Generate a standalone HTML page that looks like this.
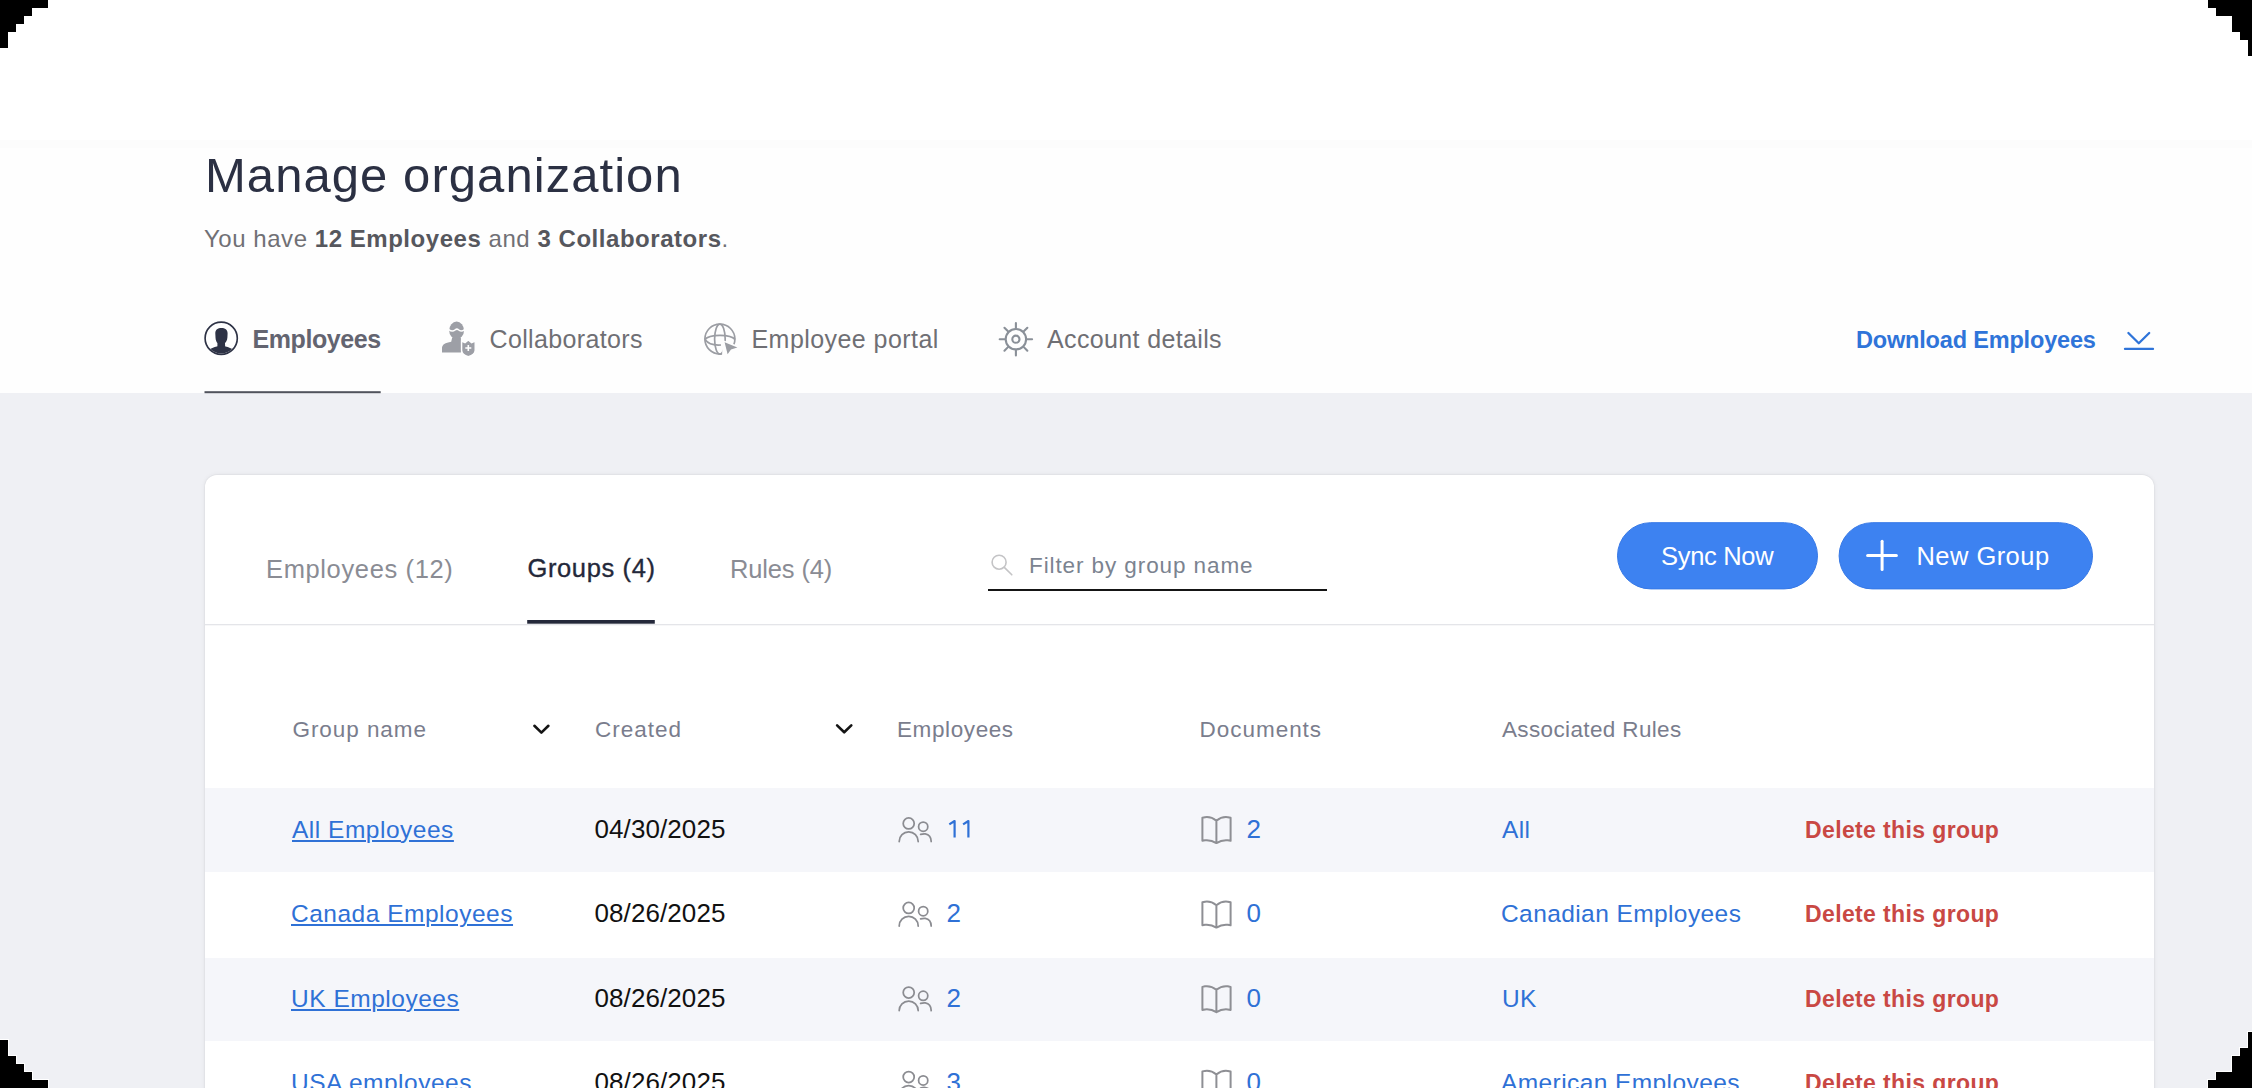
<!DOCTYPE html>
<html><head><meta charset="utf-8"><title>Manage organization</title>
<style>
html,body{margin:0;padding:0;}
body{width:2252px;height:1088px;overflow:hidden;position:relative;background:#eff0f4;font-family:"Liberation Sans",sans-serif;}
.hdr{position:absolute;left:0;top:0;width:2252px;height:393px;background:#fff;}
.hline{position:absolute;left:0;top:140px;width:2252px;height:8px;background:#fcfcfc;}
.hbody{position:absolute;left:0;top:148px;width:2252px;height:245px;background:#fefefe;}
.card{position:absolute;left:205px;top:475px;width:1949px;height:700px;background:#fff;border-radius:12px;box-shadow:0 0 0 1px rgba(0,0,0,0.025),0 0 5px rgba(0,0,0,0.07);}
.row{position:absolute;left:205px;width:1949px;background:#f5f6fa;}
.ov{position:absolute;left:0;top:0;}
.t{position:absolute;line-height:1;white-space:nowrap;}
.t b{font-weight:700;}
.u{text-decoration:underline;text-decoration-thickness:2px;text-underline-offset:2.2px;}
</style></head>
<body>
<div class="hdr"></div><div class="hline"></div><div class="hbody"></div>
<div class="card"></div>
<div class="row" style="top:788px;height:84.2px"></div>
<div class="row" style="top:957.6px;height:83.2px"></div>
<svg class="ov" width="2252" height="1088" viewBox="0 0 2252 1088">
<!-- nav: employees avatar -->
<defs><clipPath id="cc"><circle cx="221.2" cy="338.2" r="15.2"/></clipPath></defs>
<circle cx="221.2" cy="338.2" r="16.1" fill="none" stroke="#2d3245" stroke-width="1.65"/>
<g clip-path="url(#cc)" fill="#2d3245">
<path d="M215.3 333.5 C215.3 329.5 217.8 328 221.4 328 C225 328 227.6 329.5 227.6 333.5 L227.4 337.5 C227.2 340.5 226 342 225 343 L225.2 348 L217.4 348 L217.4 343 C216.6 342 215.6 340.5 215.5 337.5 Z"/>
<ellipse cx="221.2" cy="360.2" rx="17" ry="14.2"/>
</g>
<!-- collaborators -->
<g fill="#9d9fa6">
<ellipse cx="456.6" cy="330.4" rx="7.4" ry="8.8"/>
<path d="M442 352.6 L442 348.3 C442 344.6 445.2 342.6 451.2 341.7 L452.2 337.6 L460.9 337.6 L460.9 352.6 Z"/>
</g>
<path d="M448.8 329.6 C451.5 331.6 453.8 331 455 330 C456.2 329 457.2 328.6 458.4 329.8 C459.8 331.2 462 331.6 464.6 329.6" fill="none" stroke="#fff" stroke-width="1.5"/>
<path d="M461.6 341.2 L465 342.6 L468.3 340 L471.6 342.6 L475.2 341.2 L475.2 350.2 C475 354 471.5 355.8 468.3 356.6 C465.1 355.8 461.8 354 461.6 350.2 Z" fill="#9d9fa6" stroke="#fff" stroke-width="1.4"/>
<path d="M468.3 345 V351 M465.3 348 H471.3" stroke="#fff" stroke-width="1.6"/>
<!-- globe -->
<g fill="none" stroke="#9b9da3" stroke-width="1.7">
<circle cx="719.9" cy="339.1" r="15"/>
<ellipse cx="719.9" cy="339.1" rx="5.3" ry="15"/>
<path d="M705 339.6 C709 334 731 334 735 339.6"/>
<path d="M705 339.6 C709 345 715 345.5 721 345"/>
</g>
<path d="M722.5 340 L740 346.5 L741 360 L722 360 Z" fill="#fefefe"/>
<path d="M724.6 342.3 L737.4 347.5 L731 349.4 L727.6 354.2 Z" fill="#9b9da3"/>
<!-- gear -->
<g fill="none" stroke="#8a9098" stroke-width="2.1" stroke-linecap="round">
<circle cx="1015.9" cy="339.2" r="10.2"/>
<circle cx="1015.9" cy="339.2" r="3.6"/>
<line x1="1027.10" y1="339.20" x2="1032.10" y2="339.20"/><line x1="1023.82" y1="347.12" x2="1027.36" y2="350.66"/><line x1="1015.90" y1="350.40" x2="1015.90" y2="355.40"/><line x1="1007.98" y1="347.12" x2="1004.44" y2="350.66"/><line x1="1004.70" y1="339.20" x2="999.70" y2="339.20"/><line x1="1007.98" y1="331.28" x2="1004.44" y2="327.74"/><line x1="1015.90" y1="328.00" x2="1015.90" y2="323.00"/><line x1="1023.82" y1="331.28" x2="1027.36" y2="327.74"/>
</g>
<!-- download icon -->
<g fill="none" stroke="#2f74d9" stroke-width="2.3" stroke-linecap="round" stroke-linejoin="round">
<polyline points="2128.4,333 2138.8,343.2 2149.2,333"/>
<line x1="2125" y1="348.9" x2="2153" y2="348.9"/>
</g>
<!-- nav underline -->
<rect x="204.5" y="391.2" width="176.2" height="2" fill="#50535c"/>
<!-- card tabs -->
<rect x="205" y="624" width="1949" height="1.3" fill="#e4e5e9"/>
<rect x="527.2" y="620" width="127.6" height="3.7" fill="#24283a"/>
<!-- search -->
<g fill="none" stroke="#c4c4c6" stroke-width="1.6" stroke-linecap="round">
<circle cx="999.1" cy="562.2" r="7"/>
<line x1="1004.3" y1="567.4" x2="1011.8" y2="574.8"/>
</g>
<rect x="988" y="589" width="339" height="2" fill="#151515"/>
<!-- buttons -->
<rect x="1617.5" y="522.7" width="200" height="66.2" rx="33.1" fill="#3d82f1" stroke="#3678e6" stroke-width="1"/>
<rect x="1839.1" y="522.7" width="253.4" height="66.2" rx="33.1" fill="#3d82f1" stroke="#3678e6" stroke-width="1"/>
<g stroke="#fff" stroke-width="3" stroke-linecap="round">
<line x1="1867.6" y1="555.5" x2="1896.4" y2="555.5"/>
<line x1="1882.1" y1="541.2" x2="1882.1" y2="569.6"/>
</g>
<!-- chevrons -->
<g fill="none" stroke="#141414" stroke-width="2.6" stroke-linecap="round" stroke-linejoin="round">
<polyline points="534.4,725.8 541.4,732.6 548.4,725.8"/>
<polyline points="837.1,725.4 844.2,732.3 851.3,725.4"/>
</g>
<g fill="none" stroke="#8b8c91" stroke-width="1.75" stroke-linecap="round">
<circle cx="908.7" cy="823.40" r="5.5"/>
<path d="M899.2 841.50 A9.5 9.6 0 0 1 918.2 841.50"/>
<circle cx="923.2" cy="826.70" r="4.6"/>
<path d="M920.6 834.30 Q923 833.60 925.3 833.80 Q931 834.70 931.2 841.50"/>
</g><path fill="none" stroke="#8e8f94" stroke-width="2" stroke-linejoin="round" d="M1216.4 820.70 C1213 817.90 1209 816.70 1205 817.20 L1202.4 817.80 L1202.4 840.80 L1205 840.30 C1209 839.90 1213 840.90 1216.4 843.10 C1219.8 840.90 1223.8 839.90 1227.8 840.30 L1230.6 840.80 L1230.6 817.80 L1227.8 817.20 C1223.8 816.70 1219.8 817.90 1216.4 820.70 Z M1216.4 820.70 L1216.4 843.10"/><g fill="none" stroke="#8b8c91" stroke-width="1.75" stroke-linecap="round">
<circle cx="908.7" cy="907.90" r="5.5"/>
<path d="M899.2 926.00 A9.5 9.6 0 0 1 918.2 926.00"/>
<circle cx="923.2" cy="911.20" r="4.6"/>
<path d="M920.6 918.80 Q923 918.10 925.3 918.30 Q931 919.20 931.2 926.00"/>
</g><path fill="none" stroke="#8e8f94" stroke-width="2" stroke-linejoin="round" d="M1216.4 905.20 C1213 902.40 1209 901.20 1205 901.70 L1202.4 902.30 L1202.4 925.30 L1205 924.80 C1209 924.40 1213 925.40 1216.4 927.60 C1219.8 925.40 1223.8 924.40 1227.8 924.80 L1230.6 925.30 L1230.6 902.30 L1227.8 901.70 C1223.8 901.20 1219.8 902.40 1216.4 905.20 Z M1216.4 905.20 L1216.4 927.60"/><g fill="none" stroke="#8b8c91" stroke-width="1.75" stroke-linecap="round">
<circle cx="908.7" cy="992.50" r="5.5"/>
<path d="M899.2 1010.60 A9.5 9.6 0 0 1 918.2 1010.60"/>
<circle cx="923.2" cy="995.80" r="4.6"/>
<path d="M920.6 1003.40 Q923 1002.70 925.3 1002.90 Q931 1003.80 931.2 1010.60"/>
</g><path fill="none" stroke="#8e8f94" stroke-width="2" stroke-linejoin="round" d="M1216.4 989.80 C1213 987.00 1209 985.80 1205 986.30 L1202.4 986.90 L1202.4 1009.90 L1205 1009.40 C1209 1009.00 1213 1010.00 1216.4 1012.20 C1219.8 1010.00 1223.8 1009.00 1227.8 1009.40 L1230.6 1009.90 L1230.6 986.90 L1227.8 986.30 C1223.8 985.80 1219.8 987.00 1216.4 989.80 Z M1216.4 989.80 L1216.4 1012.20"/><g fill="none" stroke="#8b8c91" stroke-width="1.75" stroke-linecap="round">
<circle cx="908.7" cy="1077.10" r="5.5"/>
<path d="M899.2 1095.20 A9.5 9.6 0 0 1 918.2 1095.20"/>
<circle cx="923.2" cy="1080.40" r="4.6"/>
<path d="M920.6 1088.00 Q923 1087.30 925.3 1087.50 Q931 1088.40 931.2 1095.20"/>
</g><path fill="none" stroke="#8e8f94" stroke-width="2" stroke-linejoin="round" d="M1216.4 1074.40 C1213 1071.60 1209 1070.40 1205 1070.90 L1202.4 1071.50 L1202.4 1094.50 L1205 1094.00 C1209 1093.60 1213 1094.60 1216.4 1096.80 C1219.8 1094.60 1223.8 1093.60 1227.8 1094.00 L1230.6 1094.50 L1230.6 1071.50 L1227.8 1070.90 C1223.8 1070.40 1219.8 1071.60 1216.4 1074.40 Z M1216.4 1074.40 L1216.4 1096.80"/><path d="M954.6 837.6 V821 L949.3 824.4 M968.4 837.6 V821 L963.1 824.4" fill="none" stroke="#2f71d6" stroke-width="2.2" stroke-linejoin="round"/>
<!-- corners -->
<rect x="-1" y="-1" width="50" height="10" fill="#fff"/><rect x="-1" y="7" width="34" height="10" fill="#fff"/><rect x="-1" y="15" width="26" height="10" fill="#fff"/><rect x="-1" y="23" width="18" height="10" fill="#fff"/><rect x="-1" y="31" width="10" height="18" fill="#fff"/><rect x="2207" y="-1" width="46" height="10" fill="#fff"/><rect x="2215" y="7" width="38" height="10" fill="#fff"/><rect x="2231" y="15" width="22" height="18" fill="#fff"/><rect x="2239" y="31" width="14" height="10" fill="#fff"/><rect x="2247" y="39" width="6" height="18" fill="#fff"/><rect x="-1" y="1039" width="10" height="18" fill="#fff"/><rect x="-1" y="1055" width="18" height="10" fill="#fff"/><rect x="-1" y="1063" width="26" height="10" fill="#fff"/><rect x="-1" y="1071" width="34" height="10" fill="#fff"/><rect x="-1" y="1079" width="50" height="10" fill="#fff"/><rect x="2247" y="1031" width="6" height="18" fill="#fff"/><rect x="2239" y="1047" width="14" height="10" fill="#fff"/><rect x="2231" y="1055" width="22" height="18" fill="#fff"/><rect x="2215" y="1071" width="38" height="10" fill="#fff"/><rect x="2207" y="1079" width="46" height="10" fill="#fff"/><rect x="0" y="0" width="48" height="8" fill="#000"/><rect x="0" y="8" width="32" height="8" fill="#000"/><rect x="0" y="16" width="24" height="8" fill="#000"/><rect x="0" y="24" width="16" height="8" fill="#000"/><rect x="0" y="32" width="8" height="16" fill="#000"/><rect x="2208" y="0" width="44" height="8" fill="#000"/><rect x="2216" y="8" width="36" height="8" fill="#000"/><rect x="2232" y="16" width="20" height="16" fill="#000"/><rect x="2240" y="32" width="12" height="8" fill="#000"/><rect x="2248" y="40" width="4" height="16" fill="#000"/><rect x="0" y="1040" width="8" height="16" fill="#000"/><rect x="0" y="1056" width="16" height="8" fill="#000"/><rect x="0" y="1064" width="24" height="8" fill="#000"/><rect x="0" y="1072" width="32" height="8" fill="#000"/><rect x="0" y="1080" width="48" height="8" fill="#000"/><rect x="2248" y="1032" width="4" height="16" fill="#000"/><rect x="2240" y="1048" width="12" height="8" fill="#000"/><rect x="2232" y="1056" width="20" height="16" fill="#000"/><rect x="2216" y="1072" width="36" height="8" fill="#000"/><rect x="2208" y="1080" width="44" height="8" fill="#000"/>
</svg>
<span class="t" style="left:205.00px;top:151.01px;font-size:49px;font-weight:400;letter-spacing:1.056px;color:#2b3043;">Manage organization</span>
<span class="t" style="left:204.00px;top:227.01px;font-size:24px;font-weight:400;letter-spacing:0.541px;color:#707075;">You have <b style="color:#56575d">12 Employees</b> and <b style="color:#56575d">3 Collaborators</b>.</span>
<span class="t" style="left:252.50px;top:326.51px;font-size:25px;font-weight:700;letter-spacing:-0.425px;color:#636470;">Employees</span>
<span class="t" style="left:489.50px;top:326.81px;font-size:25px;font-weight:400;letter-spacing:0.350px;color:#6f6f74;">Collaborators</span>
<span class="t" style="left:751.50px;top:326.81px;font-size:25px;font-weight:400;letter-spacing:0.443px;color:#6f6f74;">Employee portal</span>
<span class="t" style="left:1047.00px;top:326.81px;font-size:25px;font-weight:400;letter-spacing:0.357px;color:#6f6f74;">Account details</span>
<span class="t" style="left:1856.00px;top:328.81px;font-size:23.5px;font-weight:700;letter-spacing:-0.176px;color:#2f74d9;">Download Employees</span>
<span class="t" style="left:266.00px;top:556.80px;font-size:25.5px;font-weight:400;letter-spacing:0.631px;color:#8a8c94;">Employees (12)</span>
<span class="t" style="left:527.50px;top:555.80px;font-size:25.5px;font-weight:400;letter-spacing:0.622px;color:#24283a;-webkit-text-stroke:0.35px #24283a;">Groups (4)</span>
<span class="t" style="left:730.00px;top:556.60px;font-size:25.5px;font-weight:400;letter-spacing:-0.150px;color:#8a8c94;">Rules (4)</span>
<span class="t" style="left:1029.00px;top:554.81px;font-size:22.5px;font-weight:400;letter-spacing:0.905px;color:#7b8390;">Filter by group name</span>
<span class="t" style="left:1661.00px;top:543.60px;font-size:25.5px;font-weight:400;letter-spacing:-0.314px;color:#ffffff;">Sync Now</span>
<span class="t" style="left:1916.50px;top:543.60px;font-size:25.5px;font-weight:400;letter-spacing:0.450px;color:#ffffff;">New Group</span>
<span class="t" style="left:292.50px;top:719.00px;font-size:22.5px;font-weight:400;letter-spacing:0.933px;color:#7a7d8d;">Group name</span>
<span class="t" style="left:595.00px;top:719.00px;font-size:22.5px;font-weight:400;letter-spacing:1.000px;color:#7a7d8d;">Created</span>
<span class="t" style="left:897.00px;top:719.00px;font-size:22.5px;font-weight:400;letter-spacing:0.600px;color:#7a7d8d;">Employees</span>
<span class="t" style="left:1199.50px;top:719.00px;font-size:22.5px;font-weight:400;letter-spacing:0.975px;color:#7a7d8d;">Documents</span>
<span class="t" style="left:1502.00px;top:719.00px;font-size:22.5px;font-weight:400;letter-spacing:0.360px;color:#7a7d8d;">Associated Rules</span>
<span class="t u" style="left:292.00px;top:817.51px;font-size:24.5px;font-weight:400;letter-spacing:0.512px;color:#2f71d6;">All Employees</span>
<span class="t" style="left:594.50px;top:815.50px;font-size:26px;font-weight:400;letter-spacing:0.089px;color:#111111;">04/30/2025</span>
<span class="t" style="left:1246.50px;top:815.50px;font-size:26px;font-weight:400;letter-spacing:0.000px;color:#2f71d6;">2</span>
<span class="t" style="left:1502.00px;top:817.50px;font-size:24.5px;font-weight:400;letter-spacing:0.412px;color:#2f71d6;">All</span>
<span class="t" style="left:1805.00px;top:818.51px;font-size:23px;font-weight:700;letter-spacing:0.375px;color:#c94844;">Delete this group</span>
<span class="t u" style="left:291.00px;top:902.01px;font-size:24.5px;font-weight:400;letter-spacing:0.512px;color:#2f71d6;">Canada Employees</span>
<span class="t" style="left:594.50px;top:900.00px;font-size:26px;font-weight:400;letter-spacing:0.089px;color:#111111;">08/26/2025</span>
<span class="t" style="left:946.50px;top:900.01px;font-size:26px;font-weight:400;letter-spacing:0.000px;color:#2f71d6;">2</span>
<span class="t" style="left:1246.50px;top:900.00px;font-size:26px;font-weight:400;letter-spacing:0.000px;color:#2f71d6;">0</span>
<span class="t" style="left:1501.00px;top:902.01px;font-size:24.5px;font-weight:400;letter-spacing:0.412px;color:#2f71d6;">Canadian Employees</span>
<span class="t" style="left:1805.00px;top:903.01px;font-size:23px;font-weight:700;letter-spacing:0.375px;color:#c94844;">Delete this group</span>
<span class="t u" style="left:291.00px;top:986.61px;font-size:24.5px;font-weight:400;letter-spacing:0.512px;color:#2f71d6;">UK Employees</span>
<span class="t" style="left:594.50px;top:984.60px;font-size:26px;font-weight:400;letter-spacing:0.089px;color:#111111;">08/26/2025</span>
<span class="t" style="left:946.50px;top:984.61px;font-size:26px;font-weight:400;letter-spacing:0.000px;color:#2f71d6;">2</span>
<span class="t" style="left:1246.50px;top:984.60px;font-size:26px;font-weight:400;letter-spacing:0.000px;color:#2f71d6;">0</span>
<span class="t" style="left:1502.00px;top:986.60px;font-size:24.5px;font-weight:400;letter-spacing:0.412px;color:#2f71d6;">UK</span>
<span class="t" style="left:1805.00px;top:987.61px;font-size:23px;font-weight:700;letter-spacing:0.375px;color:#c94844;">Delete this group</span>
<span class="t u" style="left:291.00px;top:1071.21px;font-size:24.5px;font-weight:400;letter-spacing:0.512px;color:#2f71d6;">USA employees</span>
<span class="t" style="left:594.50px;top:1069.20px;font-size:26px;font-weight:400;letter-spacing:0.089px;color:#111111;">08/26/2025</span>
<span class="t" style="left:946.50px;top:1069.21px;font-size:26px;font-weight:400;letter-spacing:0.000px;color:#2f71d6;">3</span>
<span class="t" style="left:1246.50px;top:1069.20px;font-size:26px;font-weight:400;letter-spacing:0.000px;color:#2f71d6;">0</span>
<span class="t" style="left:1501.00px;top:1071.21px;font-size:24.5px;font-weight:400;letter-spacing:0.412px;color:#2f71d6;">American Employees</span>
<span class="t" style="left:1805.00px;top:1072.21px;font-size:23px;font-weight:700;letter-spacing:0.375px;color:#c94844;">Delete this group</span>

</body></html>
